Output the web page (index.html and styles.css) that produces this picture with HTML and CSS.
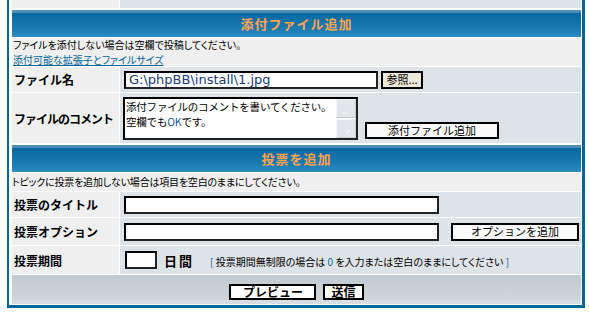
FILE: index.html
```html
<!DOCTYPE html>
<html lang="ja">

<head>
    <meta charset="UTF-8">
    <title>投稿</title>
    <link rel="stylesheet" href="styles.css">
</head>

<body>
    <div class="forumline">
        <div class="row1"></div>
        <div class="row2"></div>

        <div class="th span">添付ファイル追加</div>

        <div class="row1 span note">
            <span>ファイルを添付しない場合は空欄で投稿してください。</span>
            <a href="#">添付可能な拡張子とファイルサイズ</a>
        </div>

        <div class="row1 label">ファイル名</div>
        <div class="row2 field">
            <input class="post file-path" type="text" value="G:\phpBB\install\1.jpg">
            <button class="browse">参照...</button>
        </div>

        <div class="row1 label label-tight">ファイルのコメント</div>
        <div class="row2 field comment">
            <div class="comment-box">
                <div class="comment-text">添付ファイルのコメントを書いてください。<br>空欄でも<span class="ok">OK</span>です。</div>
                <div class="scrollbar">
                    <span class="sb-btn">
                        <svg width="17" height="17" viewBox="0 0 17 17"><path d="M5 13h7" stroke="#fafbfc" stroke-width="1"/></svg>
                    </span>
                    <span class="sb-btn">
                        <svg width="17" height="17" viewBox="0 0 17 17"><path d="M10 13l3-3" stroke="#fafbfc" stroke-width="1.2"/></svg>
                    </span>
                </div>
            </div>
            <button class="liteoption add-file">添付ファイル追加</button>
        </div>

        <div class="th span">投票を追加</div>

        <div class="row1 span note note-poll">トピックに投票を追加しない場合は項目を空白のままにしてください。</div>

        <div class="row1 label">投票のタイトル</div>
        <div class="row2 field">
            <input class="post wide" type="text">
        </div>

        <div class="row1 label">投票オプション</div>
        <div class="row2 field">
            <input class="post wide" type="text">
            <button class="liteoption add-option">オプションを追加</button>
        </div>

        <div class="row1 label">投票期間</div>
        <div class="row2 field">
            <input class="post days" type="text">
            <b class="unit">日間</b>
            <span class="gensmall"><span class="br">[</span> 投票期間無制限の場合は <span class="zero">0</span> を入力または空白のままにしてください <span class="br">]</span></span>
        </div>

        <div class="cat-bottom span">
            <button class="mainoption preview">プレビュー</button>
            <button class="mainoption">送信</button>
        </div>
    </div>
</body>

</html>
```

FILE: styles.css
```css
body {
    margin: 0;
    background: #fff;
    font-family: "Noto Sans CJK JP", sans-serif;
    color: #000;
}

.forumline {
    display: grid;
    grid-template-columns: 107px 461px;
    grid-template-rows: 14px 28px 28px 25px 50px 28px 18px 25px 27px 28px 29px;
    gap: 1px;
    width: 569px;
    margin: -10px 0 0 7px;
    padding: 1px 1px 1px 3px;
    background-color: #fff;
    border: 3px solid #006699;
    border-left-width: 2px;
}

.span {
    grid-column: 1 / -1;
}

.row1 {
    background-color: #efefef;
}

.row2 {
    background-color: #dee3e7;
}

.th {
    display: flex;
    align-items: center;
    justify-content: center;
    background: linear-gradient(#fff 0, #fff 1px, #4c8cb8 1px, #4c8cb8 4px, #0867a0 4px, #1a7bb2 70%, #2d8dc2 100%);
    color: #ffa34f;
    font-size: 13px;
    font-weight: bold;
    letter-spacing: 1px;
    padding-top: 1px;
    box-sizing: border-box;
}

.note {
    display: flex;
    flex-direction: column;
    padding: 0 0 0 1px;
    font-size: 10px;
    line-height: 14.5px;
    font-feature-settings: "palt";
}

.note a {
    color: #006699;
    text-decoration: underline;
    align-self: flex-start;
}

.note-poll {
    justify-content: center;
    padding: 0;
    letter-spacing: -0.2px;
}

.label {
    display: flex;
    align-items: center;
    padding-left: 2px;
    font-size: 12px;
    font-weight: bold;
    white-space: nowrap;
}

.label-tight {
    letter-spacing: -1px;
}

.field {
    display: flex;
    align-items: center;
    padding-left: 4px;
}

input.post {
    box-sizing: border-box;
    height: 18px;
    margin: 0;
    padding: 0 3px;
    border: 2px solid #000;
    border-right-color: #222;
    border-bottom-color: #222;
    background: #fff;
    font-family: "DejaVu Sans", sans-serif;
    font-size: 13px;
    color: #173a78;
    outline: none;
}

.file-path {
    width: 254px;
}

.wide {
    width: 315px;
}

.days {
    width: 32px;
    margin-left: 1px !important;
}

button {
    box-sizing: border-box;
    margin: 0;
    padding: 0;
    border: 2px solid #000;
    background: #fafafa;
    font-family: "Noto Sans CJK JP", sans-serif;
    font-size: 11px;
    line-height: 13px;
    color: #000;
}

.browse {
    width: 42px;
    height: 18px;
    margin-left: 3px;
    background: #ece9d8;
}

.comment {
    align-items: flex-end;
    padding-bottom: 3px;
    padding-left: 3px;
}

.comment-box {
    display: flex;
    box-sizing: border-box;
    width: 235px;
    height: 43px;
    border: 2px solid #000;
    border-right-color: #222;
    border-bottom-color: #222;
    background: #fff;
}

.comment-text {
    flex: 1;
    padding: 0 0 0 1px;
    font-size: 10.5px;
    line-height: 15.2px;
    letter-spacing: -0.2px;
    white-space: nowrap;
    overflow: hidden;
}

.comment-text .ok {
    color: #1458a0;
}

.scrollbar {
    display: flex;
    flex-direction: column;
    justify-content: space-between;
    width: 20px;
    padding: 0 0 0 1px;
}

.sb-btn {
    display: block;
    height: 17px;
    background: #e2e6ea;
    border: 1px solid #f4f6f8;
    border-right-color: #c6ccd2;
    border-bottom-color: #c6ccd2;
}

.sb-btn svg {
    display: block;
}

.add-file {
    width: 134px;
    height: 17px;
    margin: 0 0 1px 7px;
}

.add-option {
    width: 128px;
    height: 18px;
    margin-left: 12px;
}

.unit {
    margin-left: 7px;
    font-size: 13px;
    letter-spacing: 2px;
}

.gensmall {
    margin-left: 16px;
    font-size: 10px;
    font-feature-settings: "palt";
    margin-top: 3px;
}

.gensmall .br,
.gensmall .zero {
    color: #1a5fa8;
}

.cat-bottom {
    display: flex;
    justify-content: center;
    align-items: flex-start;
    gap: 7px;
    padding-top: 9px;
    box-sizing: border-box;
    background: linear-gradient(#c2cad1 0, #cfd5db 85%, #d8dde1 85%, #d8dde1 100%);
}

.mainoption {
    height: 16px;
    padding: 0 6px;
    background: #fff;
    font-size: 12px;
    font-weight: bold;
    line-height: 12px;
}

.preview {
    width: 87px;
}
```
